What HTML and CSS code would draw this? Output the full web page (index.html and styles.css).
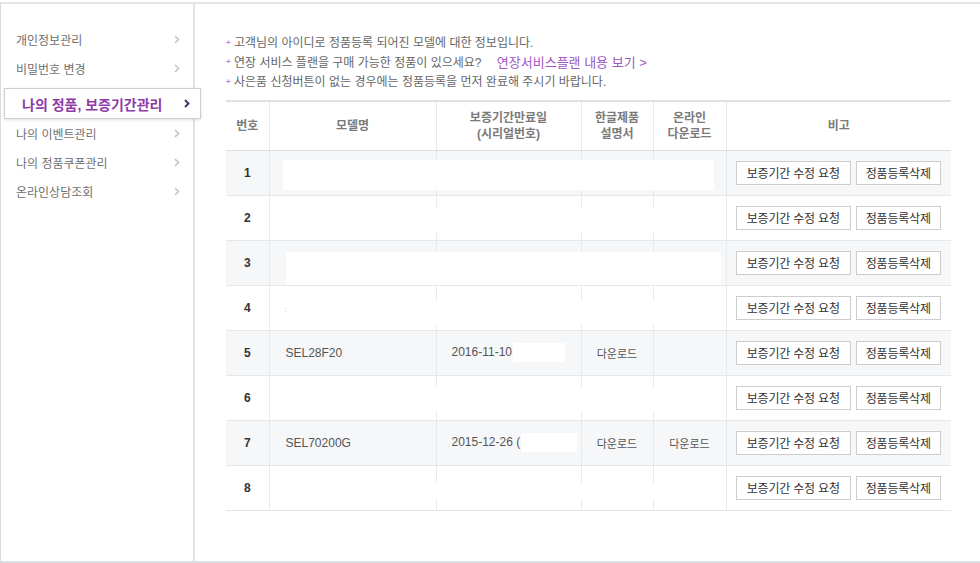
FILE: index.html
```html
<!DOCTYPE html>
<html lang="ko">
<head>
<meta charset="utf-8">
<title>나의 정품, 보증기간관리</title>
<link rel="stylesheet" href="styles.css">
</head>
<body>
<div class="frame">
  <aside class="side">
    <ul class="menu">
      <li class="item"><span>개인정보관리</span><svg class="chev" width="6" height="9" viewBox="0 0 6 9"><polyline points="1,1 4.5,4.5 1,8" fill="none" stroke="#c4c4c4" stroke-width="1.6"/></svg></li>
      <li class="item"><span>비밀번호 변경</span><svg class="chev" width="6" height="9" viewBox="0 0 6 9"><polyline points="1,1 4.5,4.5 1,8" fill="none" stroke="#c4c4c4" stroke-width="1.6"/></svg></li>
      <li class="item active"><span>나의 정품, 보증기간관리</span><svg class="chev" width="6" height="9" viewBox="0 0 6 9"><polyline points="1,1 4.5,4.5 1,8" fill="none" stroke="#4b2a6e" stroke-width="1.9"/></svg></li>
      <li class="item"><span>나의 이벤트관리</span><svg class="chev" width="6" height="9" viewBox="0 0 6 9"><polyline points="1,1 4.5,4.5 1,8" fill="none" stroke="#c4c4c4" stroke-width="1.6"/></svg></li>
      <li class="item"><span>나의 정품쿠폰관리</span><svg class="chev" width="6" height="9" viewBox="0 0 6 9"><polyline points="1,1 4.5,4.5 1,8" fill="none" stroke="#c4c4c4" stroke-width="1.6"/></svg></li>
      <li class="item"><span>온라인상담조회</span><svg class="chev" width="6" height="9" viewBox="0 0 6 9"><polyline points="1,1 4.5,4.5 1,8" fill="none" stroke="#c4c4c4" stroke-width="1.6"/></svg></li>
    </ul>
  </aside>
  <main class="content">
    <ul class="notes">
      <li>고객님의 아이디로 정품등록 되어진 모델에 대한 정보입니다.</li>
      <li>연장 서비스 플랜을 구매 가능한 정품이 있으세요? <a class="link" href="#">연장서비스플랜 내용 보기 &gt;</a></li>
      <li>사은품 신청버튼이 없는 경우에는 정품등록을 먼저 완료해 주시기 바랍니다.</li>
    </ul>
    <table class="grid">
      <colgroup>
        <col class="c-no"><col class="c-model"><col class="c-date"><col class="c-man"><col class="c-dl"><col class="c-note">
      </colgroup>
      <thead>
        <tr>
          <th>번호</th>
          <th>모델명</th>
          <th>보증기간만료일<br>(시리얼번호)</th>
          <th>한글제품<br>설명서</th>
          <th>온라인<br>다운로드</th>
          <th>비고</th>
        </tr>
      </thead>
      <tbody>
        <tr class="odd">
          <td class="no">1</td>
          <td class="model"><div class="mask m1"></div></td>
          <td></td><td></td><td></td>
          <td class="act"><div class="btns"><button class="btn wide">보증기간 수정 요청</button><button class="btn">정품등록삭제</button></div></td>
        </tr>
        <tr>
          <td class="no">2</td>
          <td class="model"><div class="mask m2"></div></td>
          <td></td><td></td><td></td>
          <td class="act"><div class="btns"><button class="btn wide">보증기간 수정 요청</button><button class="btn">정품등록삭제</button></div></td>
        </tr>
        <tr class="odd">
          <td class="no">3</td>
          <td class="model"><div class="mask m3"></div></td>
          <td></td><td></td><td></td>
          <td class="act"><div class="btns"><button class="btn wide">보증기간 수정 요청</button><button class="btn">정품등록삭제</button></div></td>
        </tr>
        <tr>
          <td class="no">4</td>
          <td class="model"><span class="dot">:</span><div class="mask m4"></div></td>
          <td></td><td></td><td></td>
          <td class="act"><div class="btns"><button class="btn wide">보증기간 수정 요청</button><button class="btn">정품등록삭제</button></div></td>
        </tr>
        <tr class="odd">
          <td class="no">5</td>
          <td class="model txt">SEL28F20</td>
          <td class="txt">2016-11-10 <span class="blank b5"></span></td>
          <td class="ctr">다운로드</td>
          <td></td>
          <td class="act"><div class="btns"><button class="btn wide">보증기간 수정 요청</button><button class="btn">정품등록삭제</button></div></td>
        </tr>
        <tr>
          <td class="no">6</td>
          <td class="model"><div class="mask m6"></div></td>
          <td></td><td></td><td></td>
          <td class="act"><div class="btns"><button class="btn wide">보증기간 수정 요청</button><button class="btn">정품등록삭제</button></div></td>
        </tr>
        <tr class="odd">
          <td class="no">7</td>
          <td class="model txt">SEL70200G</td>
          <td class="txt">2015-12-26 (<span class="blank b7"></span></td>
          <td class="ctr">다운로드</td>
          <td class="ctr">다운로드</td>
          <td class="act"><div class="btns"><button class="btn wide">보증기간 수정 요청</button><button class="btn">정품등록삭제</button></div></td>
        </tr>
        <tr>
          <td class="no">8</td>
          <td class="model"><div class="mask m8"></div></td>
          <td></td><td></td><td></td>
          <td class="act"><div class="btns"><button class="btn wide">보증기간 수정 요청</button><button class="btn">정품등록삭제</button></div></td>
        </tr>
      </tbody>
    </table>
  </main>
</div>
</body>
</html>
```
FILE: styles.css
```css
* { box-sizing: border-box; }
html, body { margin: 0; padding: 0; background: #fff; }
body {
  font-family: "Liberation Sans", "Noto Sans CJK KR", sans-serif;
  font-size: 12px;
  color: #555;
}
.frame {
  display: flex;
  margin-top: 2px;
  height: 561px;
  border-top: 2px solid #e3e5e7;
  border-left: 1px solid #dcdcdc;
  border-bottom: 2px solid #dde0e3;
}
.side {
  width: 194px;
  flex: none;
  border-right: 2px solid #e2e2e2;
  padding-top: 21px;
}
.menu { list-style: none; margin: 0; padding: 0; }
.item {
  display: flex;
  justify-content: space-between;
  align-items: center;
  height: 29px;
  padding: 0 13px 0 15px;
  font-size: 12px;
  color: #707070;
}
.item .chev { flex: none; }
.item.active {
  position: relative;
  z-index: 2;
  height: 31px;
  margin: 5px -8px 0 3px;
  padding: 0 10px 0 17px;
  background: #fff;
  border: 1px solid #cfcfcf;
  box-shadow: 0 1px 3px rgba(0,0,0,0.12);
  font-size: 14px;
  font-weight: bold;
  color: #8e3aa9;
}
.content {
  flex: 1;
  padding: 30px 0 0 31px;
}
.notes {
  list-style: none;
  margin: 0 0 8px;
  padding: 0;
  color: #666;
  font-size: 12px;
}
.notes li {
  position: relative;
  line-height: 19px;
  padding-left: 8px;
}
.notes li::before {
  content: "+";
  position: absolute;
  left: 0;
  top: -1px;
  font-size: 8px;
  font-weight: bold;
  color: #b28ccb;
}
.link {
  margin-left: 12px;
  color: #9d58bf;
  font-size: 13px;
  text-decoration: none;
}
.grid {
  width: 725px;
  table-layout: fixed;
  border-collapse: collapse;
  border-top: 2px solid #dfe1e3;
  border-bottom: 1px solid #e4e5e7;
}
.c-no { width: 43px; }
.c-model { width: 167px; }
.c-date { width: 145px; }
.c-man { width: 72px; }
.c-dl { width: 73px; }
.c-note { width: 225px; }
.grid th {
  height: 49px;
  font-size: 12px;
  font-weight: bold;
  color: #7a7a7a;
  line-height: 16px;
  text-align: center;
  border-bottom: 1px solid #dcdee0;
  border-left: 1px solid #e8e9eb;
}
.grid th:first-child { border-left: none; }
.grid td {
  height: 45px;
  padding: 0;
  border-top: 1px solid #e6e7e9;
  border-left: 1px solid #e8e9eb;
  vertical-align: middle;
  white-space: nowrap;
}
.grid td:first-child { border-left: none; }
.grid tr.odd td { background: #f6f7f9; }
.grid .no {
  text-align: center;
  font-weight: bold;
  color: #333;
  font-size: 12px;
}
.grid .txt { padding-left: 15px; color: #555; }
.grid .model.txt { padding-left: 16px; }
.grid .ctr { text-align: center; font-size: 11px; color: #555; }
.grid .model { position: relative; }
.mask { position: absolute; background: #fff; }
.m1 { left: 13px; top: 9px; width: 431px; height: 30px; }
.m2 { left: 2px; top: 11px; width: 452px; height: 26px; }
.m3 { left: 16px; top: 11px; width: 435px; height: 33px; }
.m4 { left: 2px; top: 14px; width: 452px; height: 25px; }
.m6 { left: 2px; top: 11px; width: 452px; height: 25px; }
.m8 { left: 2px; top: 17px; width: 452px; height: 17px; }
.dot {
  position: relative;
  z-index: 1;
  margin-left: 15px;
  color: #e9c36a;
  font-size: 8px;
}
.blank {
  display: inline-block;
  vertical-align: middle;
  height: 19px;
  background: #fff;
}
.b5 { width: 52px; margin-left: -2px; }
.b7 { width: 56px; margin-left: 1px; }
.act { padding: 0; }
.btns {
  display: flex;
  justify-content: center;
  gap: 5px;
  padding-right: 1px;
}
.btn {
  height: 24px;
  width: 85px;
  padding: 0;
  background: #fff;
  border: 1px solid #cdcdcd;
  border-radius: 0;
  font-family: "Liberation Sans", "Noto Sans CJK KR", sans-serif;
  font-size: 12px;
  letter-spacing: -0.2px;
  color: #333;
}
.btn.wide { width: 115px; }
```
